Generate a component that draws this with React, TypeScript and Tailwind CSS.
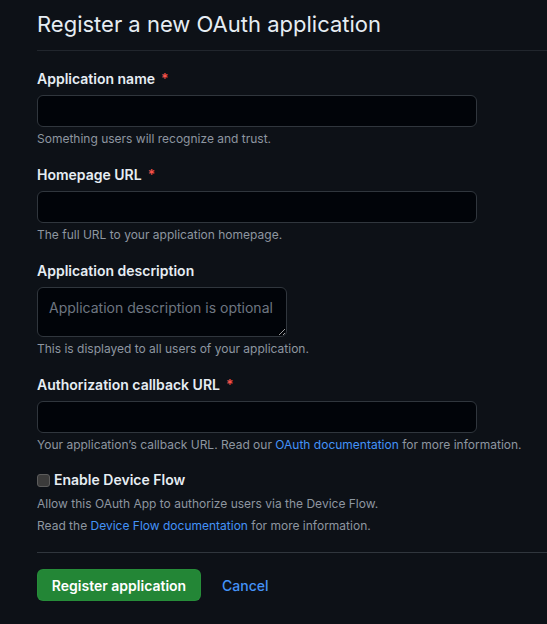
import React from 'react';

const Field: React.FC<{ label: string; required?: boolean; hint: React.ReactNode; first?: boolean }> = ({
  label,
  required,
  hint,
  first,
  children,
}: any) => (
  <div className={first ? 'mt-[18px]' : 'mt-[17px]'}>
    <label className="block text-[14px] leading-[20px] font-semibold text-[#e6edf3]">
      {label}
      {required && <span className="ml-[6px] text-[#f85149]">*</span>}
    </label>
    <div className="mt-[6px]">{children}</div>
    <p className="mt-[3px] text-[12px] leading-[18px] text-[#8d96a0]">{hint}</p>
  </div>
);

const inputCls =
  'block w-[440px] h-[32px] rounded-[6px] border border-[#30363d] bg-[#010409] px-3 text-[14px] text-[#e6edf3] outline-none';

export default function App() {
  return (
    <div
      className="min-h-screen w-full bg-[#0d1117] pl-[37px]"
      style={{ fontFamily: 'Inter, "Noto Sans", "Liberation Sans", sans-serif' }}
    >
      <div className="pt-[6px] pb-[8px] border-b border-[#21262d]">
        <h1 className="text-[22px] leading-[36px] font-normal text-[#e6edf3]">
          Register a new OAuth application
        </h1>
      </div>

      <form onSubmit={(e) => e.preventDefault()}>
        <Field first label="Application name" required hint="Something users will recognize and trust.">
          <input type="text" className={inputCls} />
        </Field>

        <Field label="Homepage URL" required hint="The full URL to your application homepage.">
          <input type="text" className={inputCls} />
        </Field>

        <Field label="Application description" hint="This is displayed to all users of your application.">
          <textarea
            placeholder="Application description is optional"
            className="block w-[250px] h-[50px] rounded-[6px] border border-[#30363d] bg-[#010409] px-[11px] pt-[10px] pb-[6px] text-[14px] leading-[20px] text-[#e6edf3] placeholder:text-[#6e7681] outline-none"
          />
        </Field>

        <Field
          label="Authorization callback URL"
          required
          hint={
            <>
              Your application’s callback URL. Read our{' '}
              <a href="#" className="text-[#4493f8]">OAuth documentation</a> for more information.
            </>
          }
        >
          <input type="text" className={inputCls} />
        </Field>

        <div className="mt-[16px] flex items-center gap-[4px] text-[14px] leading-[20px] font-semibold text-[#e6edf3]">
          <span className="w-[13px] h-[13px] rounded-[3px] bg-[#3b3b3b] border border-[#5c5c5c]" />
          Enable Device Flow
        </div>
        <p className="mt-[3px] text-[12px] leading-[22px] text-[#8d96a0]">
          Allow this OAuth App to authorize users via the Device Flow.
        </p>
        <p className="text-[12px] leading-[22px] text-[#8d96a0]">
          Read the <a href="#" className="text-[#4493f8]">Device Flow documentation</a> for more information.
        </p>

        <div className="mt-[15px] border-t border-[#30363d] pt-[16px] flex items-center gap-[21px]">
          <button
            type="submit"
            className="h-[32px] w-[164px] rounded-[6px] bg-[#238636] border border-[#2ea043]/30 text-[14px] font-semibold text-white"
          >
            Register application
          </button>
          <a href="#" className="text-[14px] font-medium text-[#4493f8]">Cancel</a>
        </div>
      </form>
    </div>
  );
}
